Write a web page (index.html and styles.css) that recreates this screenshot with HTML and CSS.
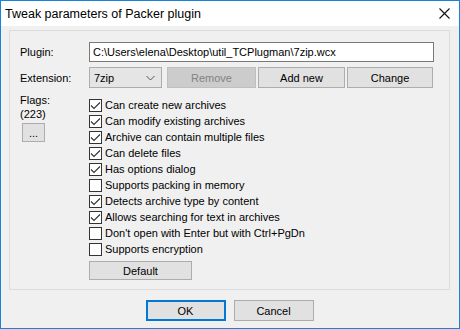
FILE: index.html
```html
<!DOCTYPE html>
<html lang="en">
<head>
    <meta charset="UTF-8">
    <title>Tweak parameters of Packer plugin</title>
    <link rel="stylesheet" href="styles.css">
</head>
<body>
    <div class="window">
        <div class="titlebar">
            <span class="title">Tweak parameters of Packer plugin</span>
            <svg class="close" width="11" height="11" viewBox="0 0 11 11">
                <path d="M0.5 0.5 L10.5 10.5 M10.5 0.5 L0.5 10.5" stroke="#111" stroke-width="1.1" fill="none"/>
            </svg>
        </div>
        <div class="client">
            <div class="group">
                <div class="row">
                    <span class="label">Plugin:</span>
                    <div class="field">C:\Users\elena\Desktop\util_TCPlugman\7zip.wcx</div>
                </div>
                <div class="row row-ext">
                    <span class="label">Extension:</span>
                    <div class="combo">
                        <span>7zip</span>
                        <svg width="9" height="6" viewBox="0 0 9 6">
                            <path d="M0.5 1 L4.5 5 L8.5 1" stroke="#555" stroke-width="1" fill="none"/>
                        </svg>
                    </div>
                    <button class="btn btn-disabled btn-remove">Remove</button>
                    <button class="btn btn-add">Add new</button>
                    <button class="btn btn-change">Change</button>
                </div>
                <div class="flags">
                    <div class="flags-side">
                        <div class="flags-label">Flags:<br>(223)</div>
                        <button class="btn btn-dots">...</button>
                    </div>
                    <div class="flags-list">
                        <label class="check on"><span class="box"></span>Can create new archives</label>
                        <label class="check on"><span class="box"></span>Can modify existing archives</label>
                        <label class="check on"><span class="box"></span>Archive can contain multiple files</label>
                        <label class="check on"><span class="box"></span>Can delete files</label>
                        <label class="check on"><span class="box"></span>Has options dialog</label>
                        <label class="check"><span class="box"></span>Supports packing in memory</label>
                        <label class="check on"><span class="box"></span>Detects archive type by content</label>
                        <label class="check on"><span class="box"></span>Allows searching for text in archives</label>
                        <label class="check"><span class="box"></span>Don't open with Enter but with Ctrl+PgDn</label>
                        <label class="check"><span class="box"></span>Supports encryption</label>
                        <button class="btn btn-default">Default</button>
                    </div>
                </div>
            </div>
            <div class="footer">
                <button class="btn btn-ok">OK</button>
                <button class="btn btn-cancel">Cancel</button>
            </div>
        </div>
    </div>
</body>
</html>
```

FILE: styles.css
```css
body {
    margin: 0;
    padding: 0;
    font-family: "Liberation Sans", Arial, sans-serif;
    font-size: 11px;
    color: #000;
}
.window {
    width: 460px;
    height: 329px;
    box-sizing: border-box;
    border: 1px solid #1883d7;
    background-color: #f0f0f0;
    display: flex;
    flex-direction: column;
}
.titlebar {
    height: 25px;
    background: #fff;
    display: flex;
    align-items: center;
    justify-content: space-between;
    padding: 0 9px 0 4px;
}
.title {
    font-size: 12.5px;
}
.close {
    display: block;
}
.client {
    flex: 1;
    padding: 4px 9px 0 8px;
}
.group {
    height: 260px;
    box-sizing: border-box;
    border: 1px solid #dcdcdc;
    padding: 11px 15px 0 10px;
}
.row {
    display: flex;
    align-items: center;
}
.label {
    width: 69px;
    flex-shrink: 0;
}
.field {
    flex: 1;
    height: 20px;
    box-sizing: border-box;
    border: 1px solid #7a7a7a;
    background: #fff;
    padding: 0 3px;
    line-height: 18px;
    white-space: nowrap;
}
.row-ext {
    margin-top: 5px;
    height: 21px;
}
.combo {
    width: 73px;
    height: 21px;
    box-sizing: border-box;
    border: 1px solid #adadad;
    background: #e5e5e5;
    display: flex;
    align-items: center;
    justify-content: space-between;
    padding: 0 6px 0 4px;
}
.btn {
    font-family: inherit;
    font-size: 11px;
    color: #000;
    background: #e1e1e1;
    border: 1px solid #adadad;
    box-sizing: border-box;
    padding: 0;
    margin: 0;
}
.btn-disabled {
    background: #cccccc;
    border-color: #bfbfbf;
    color: #838383;
}
.row-ext .btn {
    height: 21px;
}
.btn-remove {
    width: 89px;
    margin-left: 5px;
}
.btn-add {
    width: 87px;
    margin-left: 2px;
}
.btn-change {
    width: 86px;
    margin-left: 2px;
}
.flags {
    display: flex;
}
.flags-side {
    width: 69px;
    flex-shrink: 0;
    padding-top: 5px;
}
.flags-label {
    line-height: 14px;
}
.btn-dots {
    display: block;
    width: 23px;
    height: 19px;
    margin: 2px 0 0 2px;
    line-height: 12px;
}
.flags-list {
    padding-top: 9px;
}
.check {
    display: flex;
    align-items: center;
    height: 16px;
    white-space: nowrap;
}
.box {
    width: 13px;
    height: 13px;
    box-sizing: border-box;
    border: 1px solid #333;
    background: #fff;
    margin-right: 3px;
    flex-shrink: 0;
}
.check.on .box {
    background: #fff url("data:image/svg+xml,%3Csvg xmlns='http://www.w3.org/2000/svg' width='11' height='11' viewBox='0 0 11 11'%3E%3Cpath d='M1 5.5 L4 8.5 L10 2.5' stroke='%23333' stroke-width='1.1' fill='none'/%3E%3C/svg%3E") no-repeat center;
}
.btn-default {
    display: block;
    width: 103px;
    height: 19px;
    margin-top: 4px;
}
.footer {
    display: flex;
    justify-content: center;
    gap: 8px;
    margin-top: 10px;
}
.footer .btn {
    width: 80px;
    height: 21px;
}
.btn-ok {
    border: 2px solid #0078d7;
}
```
